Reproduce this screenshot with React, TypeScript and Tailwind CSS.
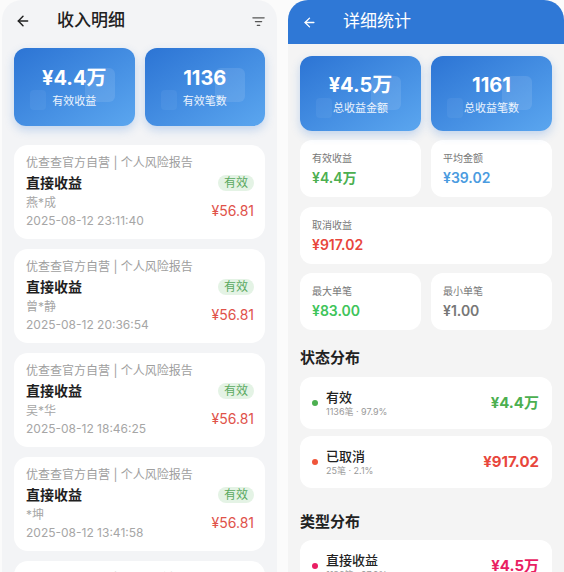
import React from "react";

const font = { fontFamily: '"Inter", "Noto Sans CJK SC", sans-serif' };

function ArrowLeft({ className }: { className?: string }) {
  return (
    <svg viewBox="0 0 24 24" fill="none" stroke="currentColor" strokeWidth={2.2} strokeLinecap="round" strokeLinejoin="round" className={className}>
      <path d="M19 12H5" />
      <path d="m12 19-7-7 7-7" />
    </svg>
  );
}

function FilterIcon({ className }: { className?: string }) {
  return (
    <svg viewBox="0 0 24 24" fill="none" stroke="currentColor" strokeWidth={2} strokeLinecap="round" className={className}>
      <path d="M3 6h18" />
      <path d="M7 12h10" />
      <path d="M10 18h4" />
    </svg>
  );
}

function BlueCard({ value, label, h }: { value: string; label: string; h: string }) {
  return (
    <div className={`relative flex-1 ${h} rounded-[12px] bg-gradient-to-br from-[#2c74d4] to-[#5ba6ef] shadow-[0_4px_10px_rgba(47,120,214,0.25)] overflow-hidden flex flex-col items-center justify-center`}>
      <div className="absolute right-[20px] top-[20px] w-[30px] h-[34px] rounded-[6px] bg-white/10" />
      <div className="absolute left-[16px] top-[42px] w-[16px] h-[20px] rounded-[4px] bg-white/5" />
      <div className="relative text-white font-bold text-[20px] leading-[26px]">{value}</div>
      <div className="relative text-white/90 text-[11px] leading-[16px] mt-[2px]">{label}</div>
    </div>
  );
}

const records = [
  { name: "燕*成", time: "2025-08-12 23:11:40" },
  { name: "曾*静", time: "2025-08-12 20:36:54" },
  { name: "吴*华", time: "2025-08-12 18:46:25" },
  { name: "*坤", time: "2025-08-12 13:41:58" },
  { name: "李*明", time: "2025-08-12 11:20:13" },
];

function RecordCard({ name, time }: { name: string; time: string }) {
  return (
    <div className="h-[94px] shrink-0 rounded-[14px] bg-white flex justify-between pl-[12px] pr-[11px] pt-[9px]">
      <div className="flex flex-col">
        <div className="text-[12px] leading-[18px] text-[#9e9e9e]">优查查官方自营 | 个人风险报告</div>
        <div className="text-[14px] leading-[22px] font-bold text-[#1f1f1f]">直接收益</div>
        <div className="text-[12px] leading-[18px] text-[#a6a6a6]">{name}</div>
        <div className="text-[12px] leading-[18px] text-[#a6a6a6]">{time}</div>
      </div>
      <div className="flex flex-col items-end pt-[21px]">
        <div className="h-[16px] w-[36px] rounded-full bg-[#e4f3e5] text-[#5aa960] text-[12px] leading-[16px] text-center">有效</div>
        <div className="mt-[10px] text-[14px] leading-[20px] text-[#e0524a]">¥56.81</div>
      </div>
    </div>
  );
}

function StatCard({ label, value, color, className }: { label: string; value: string; color: string; className?: string }) {
  return (
    <div className={`h-[57px] rounded-[12px] bg-white pl-[12px] pt-[11px] ${className ?? ""}`}>
      <div className="text-[10px] leading-[14px] text-[#777]">{label}</div>
      <div className={`text-[14px] leading-[20px] font-semibold ${color} mt-[3px]`}>{value}</div>
    </div>
  );
}

function DistCard({ dot, name, sub, amount, color }: { dot: string; name: string; sub: string; amount: string; color: string }) {
  return (
    <div className="h-[52px] rounded-[12px] bg-white flex items-center pl-[12px] pr-[13px]">
      <div className={`w-[6px] h-[6px] rounded-full ${dot}`} />
      <div className="ml-[8px] flex-1 flex flex-col">
        <div className="text-[13px] leading-[18px] font-medium text-[#222]">{name}</div>
        <div className="text-[9px] leading-[12px] text-[#999]">{sub}</div>
      </div>
      <div className={`text-[15px] font-bold ${color}`}>{amount}</div>
    </div>
  );
}

export default function App() {
  return (
    <div className="w-[564px] h-[572px] overflow-hidden bg-[#fbfbfb] flex" style={font}>
      {/* Left phone */}
      <div className="ml-[2px] w-[275px] h-full rounded-t-[20px] bg-[#f3f4f6] flex flex-col overflow-hidden">
        <div className="h-[42px] shrink-0 flex items-center pl-[13px] pr-[11px]">
          <ArrowLeft className="w-[16px] h-[16px] text-[#222]" />
          <div className="ml-[26px] text-[17px] font-medium text-[#222] flex-1">收入明细</div>
          <FilterIcon className="w-[15px] h-[15px] text-[#555]" />
        </div>
        <div className="px-[12px] pt-[6px] flex gap-[10px] shrink-0">
          <BlueCard value="¥4.4万" label="有效收益" h="h-[78px]" />
          <BlueCard value="1136" label="有效笔数" h="h-[78px]" />
        </div>
        <div className="px-[12px] mt-[19px] flex flex-col gap-[10px]">
          {records.map((r) => (
            <RecordCard key={r.time} name={r.name} time={r.time} />
          ))}
        </div>
      </div>

      {/* Right phone */}
      <div className="ml-[11px] w-[276px] h-full flex flex-col overflow-hidden rounded-t-[20px] bg-[#f4f4f4]">
        <div className="h-[44px] shrink-0 bg-[#2f78d6] flex items-center pl-[14px]">
          <ArrowLeft className="w-[15px] h-[15px] text-white" />
          <div className="ml-[26px] text-[17px] text-white">详细统计</div>
        </div>
        <div className="px-[12px] pt-[12px] flex flex-col">
          <div className="flex gap-[10px]">
            <BlueCard value="¥4.5万" label="总收益金额" h="h-[75px]" />
            <BlueCard value="1161" label="总收益笔数" h="h-[75px]" />
          </div>
          <div className="mt-[9px] flex gap-[10px]">
            <StatCard className="flex-1" label="有效收益" value="¥4.4万" color="text-[#4caf50]" />
            <StatCard className="flex-1" label="平均金额" value="¥39.02" color="text-[#4a9be0]" />
          </div>
          <StatCard className="mt-[10px]" label="取消收益" value="¥917.02" color="text-[#e8463c]" />
          <div className="mt-[9px] flex gap-[10px]">
            <StatCard className="flex-1" label="最大单笔" value="¥83.00" color="text-[#3ec45a]" />
            <StatCard className="flex-1" label="最小单笔" value="¥1.00" color="text-[#777] font-normal" />
          </div>
          <div className="mt-[17px] text-[15px] leading-[22px] font-bold text-[#222]">状态分布</div>
          <div className="mt-[8px] flex flex-col gap-[7px]">
            <DistCard dot="bg-[#4caf50]" name="有效" sub="1136笔 · 97.9%" amount="¥4.4万" color="text-[#4caf50]" />
            <DistCard dot="bg-[#f0553a]" name="已取消" sub="25笔 · 2.1%" amount="¥917.02" color="text-[#e8463c]" />
          </div>
          <div className="mt-[23px] text-[15px] leading-[22px] font-bold text-[#222]">类型分布</div>
          <div className="mt-[7px] flex flex-col">
            <DistCard dot="bg-[#e91e63]" name="直接收益" sub="1136笔 · 97.9%" amount="¥4.5万" color="text-[#e91e63]" />
          </div>
        </div>
      </div>
    </div>
  );
}
